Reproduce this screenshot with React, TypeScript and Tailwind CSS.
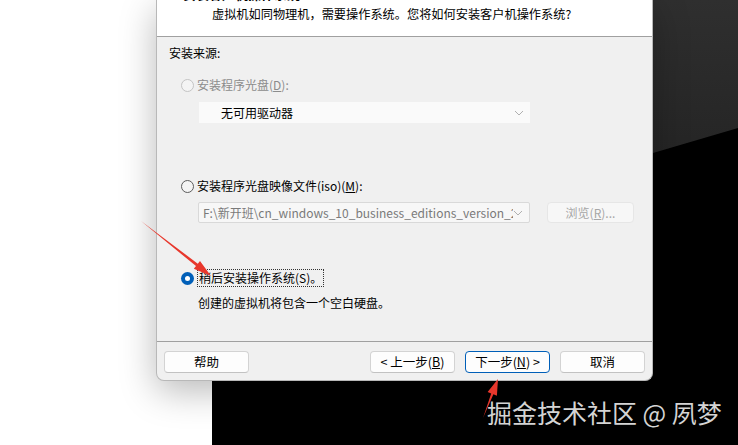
import React from "react";

const font = { fontFamily: '"Noto Sans CJK SC", "Noto Sans", sans-serif' };

function Radio({ state }: { state: "disabled" | "off" | "on" }) {
  if (state === "on") {
    return (
      <span className="flex h-[13px] w-[13px] shrink-0 items-center justify-center rounded-full bg-[#005fb8]">
        <span className="h-[5px] w-[5px] rounded-full bg-white" />
      </span>
    );
  }
  return (
    <span
      className={
        state === "disabled"
          ? "h-[13px] w-[13px] shrink-0 rounded-full border border-[#c4c4c4] bg-[#f4f4f4]"
          : "h-[13px] w-[13px] shrink-0 rounded-full border border-[#5c5c5c] bg-[#f4f4f4]"
      }
    />
  );
}

function Chevron() {
  return (
    <svg width="10" height="6" viewBox="0 0 10 6" className="shrink-0">
      <polyline points="1,1 5,5 9,1" fill="none" stroke="#b0b0b0" strokeWidth="1" />
    </svg>
  );
}

function Btn({ children, primary }: { children: React.ReactNode; primary?: boolean }) {
  return (
    <div
      className={
        primary
          ? "flex h-[22px] w-[85px] items-center justify-center rounded-[4px] border border-[#005fb8] bg-[#fdfdfd] text-[12.5px] leading-none text-black"
          : "flex h-[22px] w-[85px] items-center justify-center rounded-[4px] border border-[#d3d3d3] border-b-[#c2c2c2] bg-[#fdfdfd] text-[12.5px] leading-none text-black"
      }
    >
      {children}
    </div>
  );
}

export default function App() {
  return (
    <div className="relative h-[445px] w-[738px] overflow-hidden bg-white" style={font}>
      {/* desktop background windows */}
      <div className="absolute bottom-0 left-[212px] right-0 top-0 bg-black" />
      <div
        className="absolute left-[653px] right-0 top-0 h-[155px] bg-gradient-to-b from-[#2f2f2f] to-[#252525]"
        style={{ clipPath: "polygon(0 0, 100% 0, 100% 128px, 0 153px)" }}
      />

      {/* dialog */}
      <div className="relative ml-[156px] flex w-[497px] flex-col overflow-hidden rounded-b-[8px] border border-t-0 border-[#b8b8b8] bg-[#f0f0f0] shadow-[0_10px_36px_rgba(0,0,0,0.28)]">
        {/* header */}
        <div className="h-[37px] border-b border-[#a0a0a0] bg-white">
          <div className="mt-[-13px] pl-[26px] text-[13px] font-bold leading-[13px] text-black">
            安装客户机操作系统
          </div>
          <div className="mt-[6px] pl-[55px] text-[12.2px] leading-[16px] text-black">
            虚拟机如同物理机，需要操作系统。您将如何安装客户机操作系统?
          </div>
        </div>

        {/* body */}
        <div className="flex h-[304px] flex-col text-[12px] leading-[16px] text-black">
          <div className="mt-[8px] pl-[12px]">安装来源:</div>

          <div className="mt-[16px] flex h-[16px] items-center gap-[3px] pl-[24px] text-[#8c8c8c]">
            <Radio state="disabled" />
            <span>
              安装程序光盘(<span className="underline">D</span>):
            </span>
          </div>

          <div className="ml-[42px] mt-[9px] flex h-[21px] w-[331px] items-center justify-between bg-[#fafafa] pl-[22px] pr-[6px]">
            <span>无可用驱动器</span>
            <Chevron />
          </div>

          <div className="mt-[55px] flex h-[16px] items-center gap-[3px] pl-[24px]">
            <Radio state="off" />
            <span>
              安装程序光盘映像文件(iso)(<span className="underline">M</span>):
            </span>
          </div>

          <div className="ml-[41px] mt-[8px] flex items-center gap-[17px]">
            <div className="flex h-[21px] w-[332px] items-center justify-between rounded-[2px] border border-[#d9d9d9] bg-[#f7f7f7] pl-[4px] pr-[6px] text-[#7a7a7a]">
              <span className="w-[310px] overflow-hidden whitespace-nowrap">
                F:\新开班\cn_windows_10_business_editions_version_21h2
              </span>
              <Chevron />
            </div>
            <div className="flex h-[21px] w-[87px] items-center justify-center rounded-[4px] border border-[#e6e6e6] bg-[#f7f7f7] text-[#a6a6a6]">
              浏览(<span className="underline">R</span>)...
            </div>
          </div>

          <div className="mt-[46px] flex h-[18px] items-center gap-[3px] pl-[24px]">
            <Radio state="on" />
            <span className="flex h-[18px] items-center border border-dotted border-[#333] px-[1px]">
              稍后安装操作系统(S)。
            </span>
          </div>

          <div className="mt-[8px] pl-[41px]">创建的虚拟机将包含一个空白硬盘。</div>
        </div>

        {/* footer */}
        <div className="flex h-[39px] items-start border-t border-[#a0a0a0] px-[7px] pt-[9px]">
          <Btn>帮助</Btn>
          <div className="ml-auto flex gap-[10px]">
            <Btn>
              &lt; 上一步(<span className="underline">B</span>)
            </Btn>
            <Btn primary>
              下一步(<span className="underline">N</span>) &gt;
            </Btn>
            <Btn>取消</Btn>
          </div>
        </div>
      </div>

      {/* watermark */}
      <div className="absolute left-[487px] top-[400px] whitespace-nowrap text-[25px] leading-none text-[#d4d4d4]">
        掘金技术社区 @ 夙梦
      </div>

      {/* red arrows */}
      <svg className="pointer-events-none absolute inset-0" width="738" height="445" viewBox="0 0 738 445">
        <path
          d="M141,221 L197.8,263.7 L200,261 L211,276 L193.8,268.8 L196,266.1 Z"
          fill="#e8372c"
        />
        <path
          d="M483,418 L493.4,394.3 L496.9,395.7 L498,379 L487.6,392.1 L491.2,393.5 Z"
          fill="#e8372c"
        />
      </svg>
    </div>
  );
}
